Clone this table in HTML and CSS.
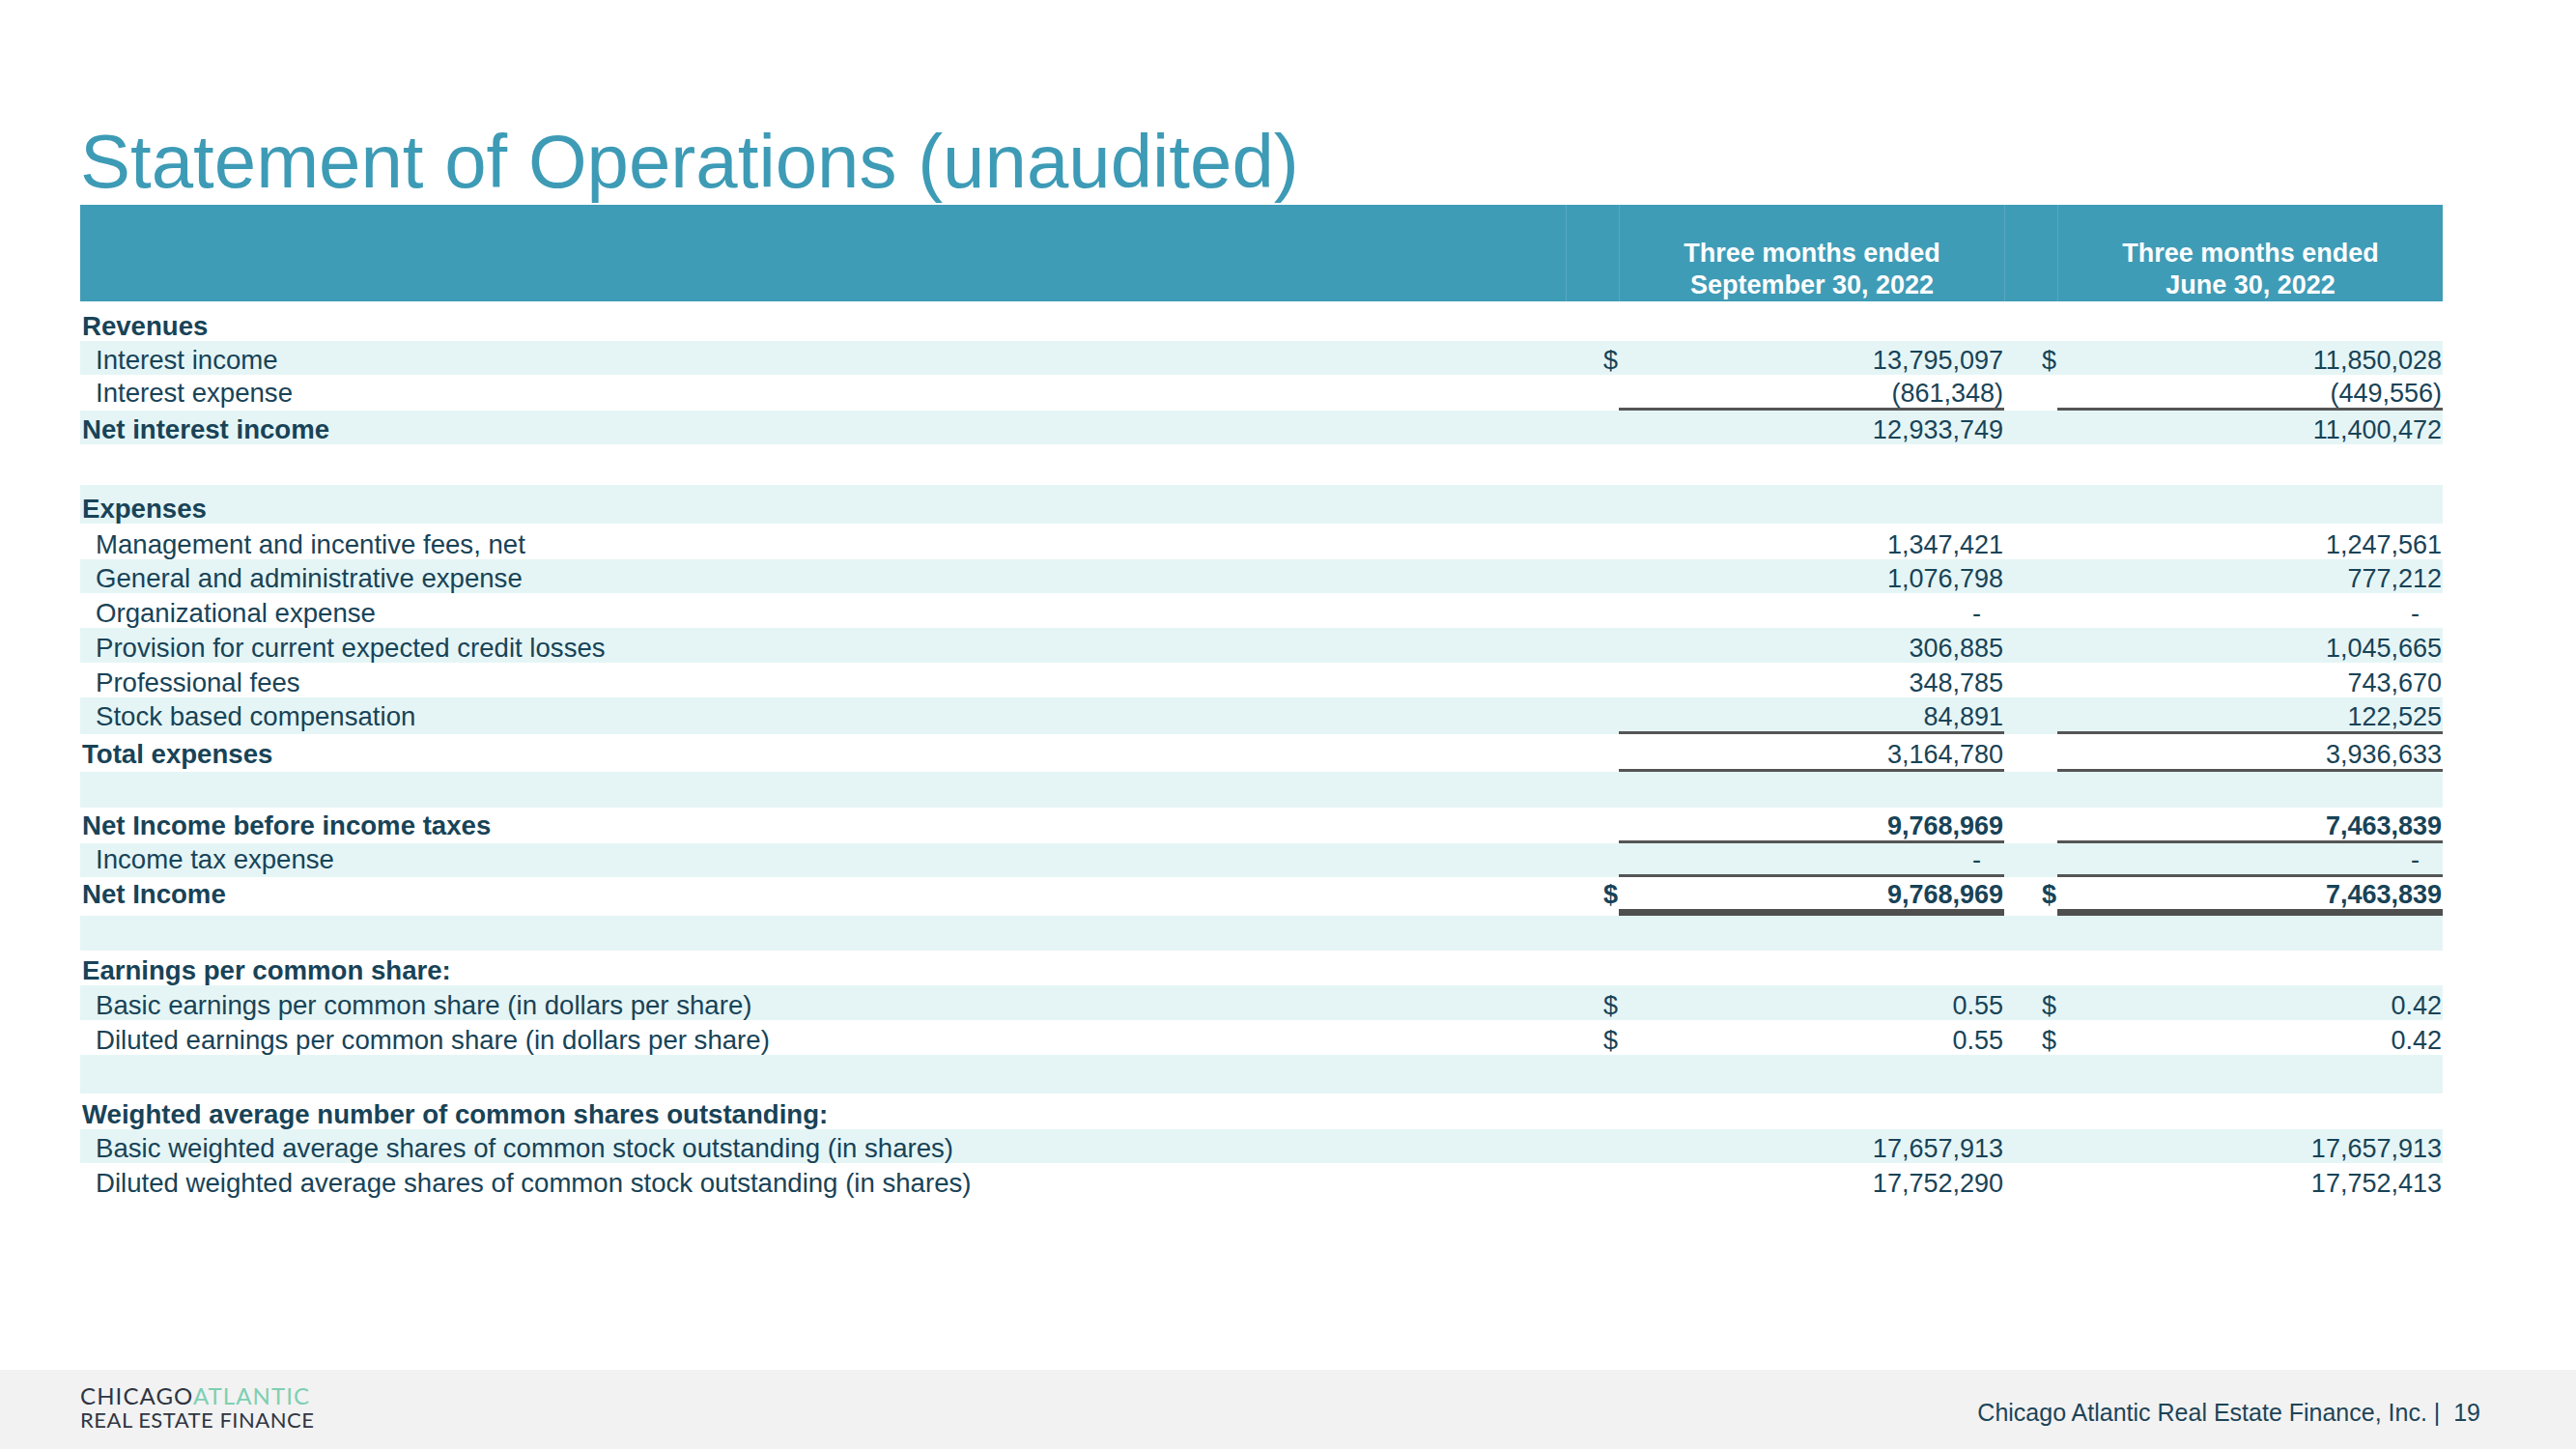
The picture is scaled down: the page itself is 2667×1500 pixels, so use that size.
FILE: index.html
```html
<!DOCTYPE html>
<html lang="en">
<head>
<meta charset="utf-8">
<title>Statement of Operations (unaudited)</title>
<link rel="stylesheet" href="styles.css">
</head>
<body>
<div class="slide">
  <h1 class="title">Statement of Operations (unaudited)</h1>

  <div class="fs">
    <div class="row hdr">
      <div class="c lab"></div>
      <div class="c cur"></div>
      <div class="c val">Three months ended<br>September 30, 2022</div>
      <div class="c cur"></div>
      <div class="c val">Three months ended<br>June 30, 2022</div>
    </div>

    <div class="row h41"><div class="c lab b">Revenues</div><div class="c cur"></div><div class="c val"></div><div class="c cur"></div><div class="c val"></div></div>
    <div class="row h35 band"><div class="c lab sub">Interest income</div><div class="c cur">$</div><div class="c val">13,795,097</div><div class="c cur">$</div><div class="c val">11,850,028</div></div>
    <div class="row h37 u1"><div class="c lab sub">Interest expense</div><div class="c cur"></div><div class="c val">(861,348)</div><div class="c cur"></div><div class="c val">(449,556)</div></div>
    <div class="row h35 band"><div class="c lab b">Net interest income</div><div class="c cur"></div><div class="c val">12,933,749</div><div class="c cur"></div><div class="c val">11,400,472</div></div>
    <div class="row h42"></div>

    <div class="row h40 band"><div class="c lab b">Expenses</div><div class="c cur"></div><div class="c val"></div><div class="c cur"></div><div class="c val"></div></div>
    <div class="row h37"><div class="c lab sub">Management and incentive fees, net</div><div class="c cur"></div><div class="c val">1,347,421</div><div class="c cur"></div><div class="c val">1,247,561</div></div>
    <div class="row h35 band"><div class="c lab sub">General and administrative expense</div><div class="c cur"></div><div class="c val">1,076,798</div><div class="c cur"></div><div class="c val">777,212</div></div>
    <div class="row"><div class="c lab sub">Organizational expense</div><div class="c cur"></div><div class="c val dash">-</div><div class="c cur"></div><div class="c val dash">-</div></div>
    <div class="row band"><div class="c lab sub">Provision for current expected credit losses</div><div class="c cur"></div><div class="c val">306,885</div><div class="c cur"></div><div class="c val">1,045,665</div></div>
    <div class="row"><div class="c lab sub">Professional fees</div><div class="c cur"></div><div class="c val">348,785</div><div class="c cur"></div><div class="c val">743,670</div></div>
    <div class="row h38 band u1"><div class="c lab sub">Stock based compensation</div><div class="c cur"></div><div class="c val">84,891</div><div class="c cur"></div><div class="c val">122,525</div></div>
    <div class="row h39 u1"><div class="c lab b">Total expenses</div><div class="c cur"></div><div class="c val">3,164,780</div><div class="c cur"></div><div class="c val">3,936,633</div></div>
    <div class="row h37 band"></div>

    <div class="row h37 u1"><div class="c lab b">Net Income before income taxes</div><div class="c cur"></div><div class="c val b">9,768,969</div><div class="c cur"></div><div class="c val b">7,463,839</div></div>
    <div class="row h35 band u1"><div class="c lab sub">Income tax expense</div><div class="c cur"></div><div class="c val dash">-</div><div class="c cur"></div><div class="c val dash">-</div></div>
    <div class="row h40 u2"><div class="c lab b">Net Income</div><div class="c cur b">$</div><div class="c val b">9,768,969</div><div class="c cur b">$</div><div class="c val b">7,463,839</div></div>
    <div class="row band"></div>

    <div class="row"><div class="c lab b">Earnings per common share:</div><div class="c cur"></div><div class="c val"></div><div class="c cur"></div><div class="c val"></div></div>
    <div class="row band"><div class="c lab sub">Basic earnings per common share (in dollars per share)</div><div class="c cur">$</div><div class="c val">0.55</div><div class="c cur">$</div><div class="c val">0.42</div></div>
    <div class="row"><div class="c lab sub">Diluted earnings per common share (in dollars per share)</div><div class="c cur">$</div><div class="c val">0.55</div><div class="c cur">$</div><div class="c val">0.42</div></div>
    <div class="row h40 band"></div>

    <div class="row h37"><div class="c lab b">Weighted average number of common shares outstanding:</div><div class="c cur"></div><div class="c val"></div><div class="c cur"></div><div class="c val"></div></div>
    <div class="row h35 band"><div class="c lab sub">Basic weighted average shares of common stock outstanding (in shares)</div><div class="c cur"></div><div class="c val">17,657,913</div><div class="c cur"></div><div class="c val">17,657,913</div></div>
    <div class="row"><div class="c lab sub">Diluted weighted average shares of common stock outstanding (in shares)</div><div class="c cur"></div><div class="c val">17,752,290</div><div class="c cur"></div><div class="c val">17,752,413</div></div>
  </div>

  <footer class="foot">
    <div class="logo">
      <div class="logo-top"><span class="chi">CHICAGO</span><span class="atl">ATLANTIC</span></div>
      <div class="logo-sub">REAL ESTATE FINANCE</div>
    </div>
    <div class="foot-text">Chicago Atlantic Real Estate Finance, Inc. |&nbsp; 19</div>
  </footer>
</div>
</body>
</html>
```

FILE: styles.css
```css
html, body {
  margin: 0;
  padding: 0;
  background: #ffffff;
}

.slide {
  width: 2667px;
  height: 1500px;
  display: flex;
  flex-direction: column;
  font-family: "Liberation Sans", Arial, Helvetica, sans-serif;
  color: #184357;
  overflow: hidden;
}

.title {
  margin: 0;
  padding: 123px 0 0 83px;
  font-size: 78px;
  line-height: 89px;
  font-weight: 400;
  color: #3d9bb6;
}

.fs {
  margin-left: 83px;
  width: 2446px;
  font-size: 27px;
}

.row {
  display: grid;
  grid-template-columns: 1538px 55px 399px 55px 399px;
  height: 36px;
  align-items: end;
  line-height: 30px;
}

.row.band { background: #e5f5f6; }

.h35 { height: 35px; }
.h37 { height: 37px; }
.h38 { height: 38px; }
.h39 { height: 39px; }
.h40 { height: 40px; }
.h41 { height: 41px; }
.h42 { height: 42px; }

.c {
  white-space: nowrap;
}

.lab {
  padding-left: 2px;
  font-size: 27.6px;
}
.lab.sub { padding-left: 16px; }
.b { font-weight: 700; }

.cur {
  text-align: right;
  padding-right: 1px;
}

.val {
  text-align: right;
  padding-right: 1px;
}

.val.dash { padding-right: 24px; }

.u1 .c { border-bottom: 3px solid transparent; }
.u1 .val { border-bottom-color: #555555; }
.u2 .c { border-bottom: 7px solid transparent; }
.u2 .val { border-bottom-color: #4f4f4f; }

/* header */
.row.hdr {
  height: 100px;
  background: #3f9cb7;
  color: #ffffff;
  align-items: stretch;
  font-weight: 700;
  line-height: 33px;
}

.hdr .c {
  display: flex;
  flex-direction: column;
  justify-content: flex-end;
}

.hdr .cur,
.hdr .val {
  border-left: 1px solid rgba(255, 255, 255, 0.13);
}

.hdr .val {
  text-align: center;
  padding-right: 0;
}

/* footer */
.foot {
  margin-top: auto;
  height: 82px;
  background: #f2f2f2;
  display: flex;
  justify-content: space-between;
  align-items: flex-start;
  padding: 0 99px 0 83px;
}

.logo {
  padding-top: 14px;
  font-family: Lato, "Noto Sans", sans-serif;
  font-weight: 400;
  color: #2f3542;
}

.logo-top {
  font-size: 24px;
  line-height: 25px;
  letter-spacing: 1.1px;
}

.logo-top .atl {
  color: #7ecfb2;
}

.logo-sub {
  font-size: 22px;
  line-height: 25px;
  letter-spacing: 0.5px;
}

.foot-text {
  margin-top: 29px;
  font-size: 25px;
  line-height: 30px;
  color: #1d4457;
}
```
